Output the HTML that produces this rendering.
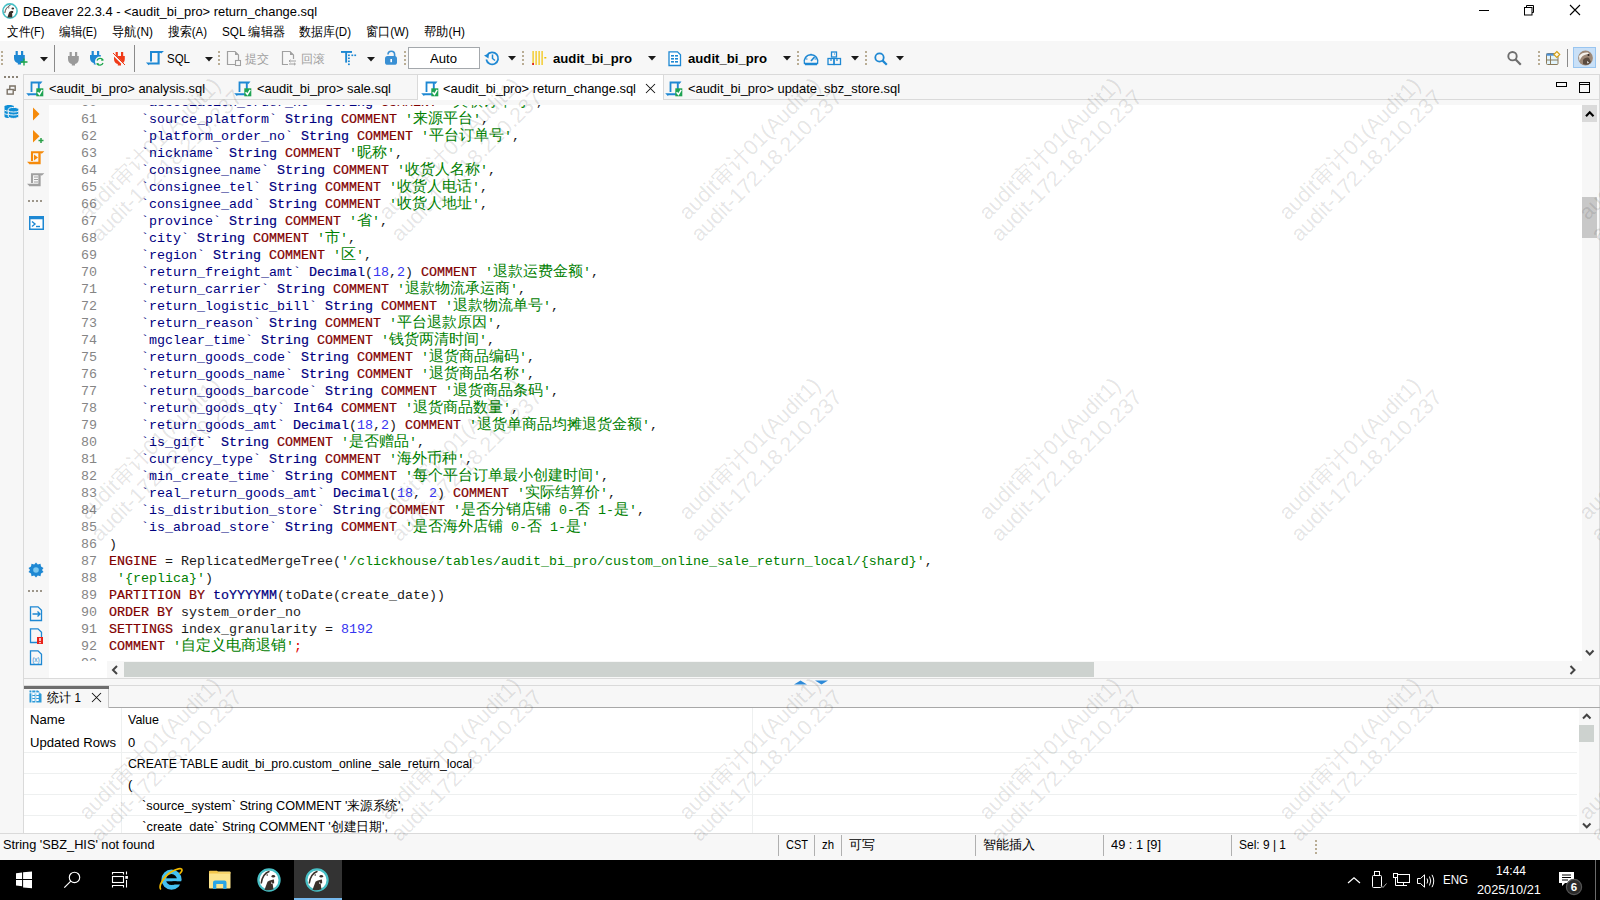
<!DOCTYPE html><html><head><meta charset="utf-8"><title>DBeaver</title><style>
*{margin:0;padding:0;box-sizing:border-box}
html,body{width:1600px;height:900px;overflow:hidden;background:#fff;font-family:"Liberation Sans",sans-serif;font-size:12px;color:#000}
.a{position:absolute}
.t{position:absolute;white-space:pre;line-height:14px}
.code{position:absolute;font-family:"Liberation Mono",monospace;font-size:13.333px;line-height:17px;white-space:pre;color:#000}
.ln{color:#858585}
.kw{color:#7f0000;-webkit-text-stroke:0.2px #7f0000}
.ty{color:#00007f;-webkit-text-stroke:0.2px #00007f}
.id{color:#00007f}
.st{color:#008000}
.nu{color:#3535f0}
.cj{display:inline-block;width:15px;text-align:left;font-size:14.5px;line-height:17px;vertical-align:top}
.wm{position:absolute;color:rgba(0,0,0,0.11);font-size:21.5px;line-height:24px;white-space:pre;transform:rotate(-45deg);transform-origin:center center;pointer-events:none}
svg{position:absolute;overflow:visible}
</style></head><body>
<div class="a" style="left:0px;top:0px;width:1600px;height:41px;background:#fff"></div>
<div class="a" style="left:0px;top:41px;width:1600px;height:33px;background:#f7f7f7"></div>
<div class="a" style="left:0px;top:74px;width:1600px;height:786px;background:#f7f7f7"></div>
<div class="a" style="left:23px;top:74px;width:1px;height:760px;background:#dadada"></div>
<svg style="left:2px;top:3px" width="16" height="16" viewBox="0 0 16 16"><circle cx="8" cy="8" r="7.1" fill="#fff" stroke="#48c0c6" stroke-width="1.6"/><path d="M2.8 10 C3.2 6.5 5 3.5 8.5 2.2" fill="none" stroke="#3a302a" stroke-width="0.9"/><circle cx="6.8" cy="4.8" r="0.6" fill="#3a302a"/><ellipse cx="10.8" cy="5.5" rx="1.3" ry="0.9" fill="#3a302a"/><path d="M5.3 14.4 L7.2 9 C8.7 8 10.3 8 11.2 7.8 L11.1 10 L10.1 10.1 L10.4 14.4 Z" fill="#3a302a"/></svg>
<div class="t" id="f23_5" style="left:23px;top:5px;font-size:13px;transform-origin:0 0;transform:scaleX(0.9922)">DBeaver 22.3.4 - &lt;audit_bi_pro&gt; return_change.sql</div>
<div class="a" style="left:1479px;top:10px;width:10px;height:1px;background:#000"></div>
<svg style="left:1524px;top:5px" width="12" height="12" viewBox="0 0 12 12"><rect x="0.5" y="2.5" width="7.5" height="7.5" fill="none" stroke="#000"/><path d="M2.5 2.5 V0.5 H9.5 V7.5 H8" fill="none" stroke="#000"/></svg>
<svg style="left:1570px;top:5px" width="11" height="11" viewBox="0 0 11 11"><path d="M0 0 L10 10 M10 0 L0 10" stroke="#000" stroke-width="1.1"/></svg>
<div class="t" id="f7_25" style="left:7px;top:25px;font-size:12.5px;transform-origin:0 0;transform:scaleX(0.8935)">文件(F)</div>
<div class="t" id="f59_25" style="left:59px;top:25px;font-size:12.5px;transform-origin:0 0;transform:scaleX(0.8905)">编辑(E)</div>
<div class="t" id="f112_25" style="left:112px;top:25px;font-size:12.5px;transform-origin:0 0;transform:scaleX(0.9456)">导航(N)</div>
<div class="t" id="f168_25" style="left:168px;top:25px;font-size:12.5px;transform-origin:0 0;transform:scaleX(0.9140)">搜索(A)</div>
<div class="t" id="f222_25" style="left:222px;top:25px;font-size:12.5px;transform-origin:0 0;transform:scaleX(0.9399)">SQL 编辑器</div>
<div class="t" id="f299_25" style="left:299px;top:25px;font-size:12.5px;transform-origin:0 0;transform:scaleX(0.9227)">数据库(D)</div>
<div class="t" id="f366_25" style="left:366px;top:25px;font-size:12.5px;transform-origin:0 0;transform:scaleX(0.9322)">窗口(W)</div>
<div class="t" id="f424_25" style="left:424px;top:25px;font-size:12.5px;transform-origin:0 0;transform:scaleX(0.9456)">帮助(H)</div>
<div class="a" style="left:1px;top:51px;width:2px;height:2px;background:#b9ad95"></div>
<div class="a" style="left:1px;top:55px;width:2px;height:2px;background:#b9ad95"></div>
<div class="a" style="left:1px;top:59px;width:2px;height:2px;background:#b9ad95"></div>
<div class="a" style="left:1px;top:63px;width:2px;height:2px;background:#b9ad95"></div>
<svg style="left:13px;top:51px" width="16" height="16" viewBox="0 0 16 16"><rect x="2.6" y="0" width="2.2" height="4.5" fill="#1e88d3"/><rect x="8" y="0" width="2.2" height="4.5" fill="#1e88d3"/><path d="M1 4 H11.8 V7 C11.8 10 10 11.5 8 12 V13.5 H4.8 V12 C2.8 11.5 1 10 1 7 Z" fill="#1e88d3"/><path d="M11 7.5 V14.5 M7.5 11 H14.5" stroke="#1aa54a" stroke-width="1.4"/></svg>
<svg style="left:40px;top:57px" width="8" height="5" viewBox="0 0 8 5"><path d="M0 0 H8 L4 4.5 Z" fill="#1a1a1a"/></svg>
<div class="a" style="left:54px;top:45px;width:1px;height:27px;background:#8a8a8a"></div>
<svg style="left:67px;top:52px" width="16" height="16" viewBox="0 0 16 16"><rect x="2.6" y="0" width="2.2" height="4.5" fill="#9a9a9a"/><rect x="8" y="0" width="2.2" height="4.5" fill="#9a9a9a"/><path d="M1 4 H11.8 V7 C11.8 10 10 11.5 8 12 V13.5 H4.8 V12 C2.8 11.5 1 10 1 7 Z" fill="#9a9a9a"/></svg>
<svg style="left:89px;top:51px" width="16" height="16" viewBox="0 0 16 16"><rect x="2.6" y="0" width="2.2" height="4.5" fill="#1e88d3"/><rect x="8" y="0" width="2.2" height="4.5" fill="#1e88d3"/><path d="M1 4 H11.8 V7 C11.8 10 10 11.5 8 12 V13.5 H4.8 V12 C2.8 11.5 1 10 1 7 Z" fill="#1e88d3"/><circle cx="11" cy="10.5" r="5" fill="#f7f7f7"/><path d="M8 9.5 A3.3 3.3 0 0 1 14 9" stroke="#1aa54a" stroke-width="1.3" fill="none"/><path d="M14 12 A3.3 3.3 0 0 1 8 12.5" stroke="#1aa54a" stroke-width="1.3" fill="none"/><path d="M12.5 7.3 L15 9.3 L12.3 10" fill="#1aa54a"/><path d="M9.5 14.7 L7 12.7 L9.7 12" fill="#1aa54a"/></svg>
<svg style="left:113px;top:52px" width="16" height="16" viewBox="0 0 16 16"><rect x="2.6" y="0" width="2.2" height="4.5" fill="#f03a17"/><rect x="8" y="0" width="2.2" height="4.5" fill="#f03a17"/><path d="M1 4 H11.8 V7 C11.8 10 10 11.5 8 12 V13.5 H4.8 V12 C2.8 11.5 1 10 1 7 Z" fill="#f03a17"/><path d="M0 2 L12 14" stroke="#f7f7f7" stroke-width="2.2"/><path d="M0 1 L12 13" stroke="#f03a17" stroke-width="1"/></svg>
<div class="a" style="left:134px;top:45px;width:1px;height:27px;background:#8a8a8a"></div>
<svg style="left:147px;top:50px" width="16" height="16" viewBox="0 0 16 16"><path d="M4 11.5 V2 H14.5 L13.6 2.9" fill="none" stroke="#1e88d3" stroke-width="2"/><path d="M11.6 2 V13.5 H1.5 L2.4 14.4" fill="none" stroke="#1e88d3" stroke-width="2.1"/></svg>
<div class="t" id="f167_52" style="left:167px;top:52px;font-size:13.5px;color:#000;transform-origin:0 0;transform:scaleX(0.8514)">SQL</div>
<svg style="left:205px;top:57px" width="8" height="5" viewBox="0 0 8 5"><path d="M0 0 H8 L4 4.5 Z" fill="#1a1a1a"/></svg>
<div class="a" style="left:218px;top:51px;width:2px;height:2px;background:#b9ad95"></div>
<div class="a" style="left:218px;top:55px;width:2px;height:2px;background:#b9ad95"></div>
<div class="a" style="left:218px;top:59px;width:2px;height:2px;background:#b9ad95"></div>
<div class="a" style="left:218px;top:63px;width:2px;height:2px;background:#b9ad95"></div>
<svg style="left:226px;top:50px" width="16" height="16" viewBox="0 0 16 16"><path d="M1.5 1.5 H9 L12.5 5 V14.5 H1.5 Z" fill="none" stroke="#a0a0a0" stroke-width="1.2"/><path d="M9 1.5 V5 H12.5" fill="#a0a0a0"/><rect x="9.5" y="10.5" width="5" height="5" fill="#f7f7f7" stroke="#a0a0a0" stroke-width="1.1"/></svg>
<div class="t" style="left:245px;top:52px;font-size:12px;color:#a0a0a0">提交</div>
<svg style="left:281px;top:50px" width="16" height="16" viewBox="0 0 16 16"><path d="M1.5 1.5 H9 L12.5 5 V14.5 H1.5 Z" fill="none" stroke="#a0a0a0" stroke-width="1.2"/><path d="M9 1.5 V5 H12.5" fill="#a0a0a0"/><rect x="7" y="9" width="9" height="7" fill="#f7f7f7"/><path d="M8.5 11 H15 M14 14 H8 M9.5 9.8 L8 11 L9.5 12.2 M13 12.8 L14.5 14 L13 15.2" stroke="#a0a0a0" stroke-width="1" fill="none"/></svg>
<div class="t" style="left:301px;top:52px;font-size:12px;color:#a0a0a0">回滚</div>
<svg style="left:341px;top:51px" width="16" height="16" viewBox="0 0 16 16"><rect x="0" y="0" width="11" height="1.9" fill="#1e88d3"/><rect x="4.2" y="0" width="1.9" height="11.6" fill="#1e88d3"/><rect x="7" y="3.5" width="1.8" height="1.6" fill="#1e88d3"/><rect x="10.4" y="3.5" width="1.8" height="1.6" fill="#1e88d3"/><rect x="13.3" y="3.5" width="1.8" height="1.6" fill="#1e88d3"/><rect x="7" y="6.5" width="1.8" height="1.6" fill="#1e88d3"/><rect x="7" y="9.5" width="1.8" height="1.6" fill="#1e88d3"/><rect x="7" y="12.5" width="1.8" height="1.6" fill="#1e88d3"/></svg>
<svg style="left:367px;top:57px" width="8" height="5" viewBox="0 0 8 5"><path d="M0 0 H8 L4 4.5 Z" fill="#1a1a1a"/></svg>
<svg style="left:384px;top:50px" width="14" height="16" viewBox="0 0 14 16"><path d="M4 4.5 A3.3 3.3 0 0 1 10.6 4.5 V7" fill="none" stroke="#3a90d4" stroke-width="1.6"/><rect x="1" y="6" width="12" height="8.8" rx="2.6" fill="#3a90d4"/><rect x="6.4" y="9" width="1.6" height="3.2" fill="#fff"/></svg>
<div class="a" style="left:404px;top:51px;width:2px;height:2px;background:#b9ad95"></div>
<div class="a" style="left:404px;top:55px;width:2px;height:2px;background:#b9ad95"></div>
<div class="a" style="left:404px;top:59px;width:2px;height:2px;background:#b9ad95"></div>
<div class="a" style="left:404px;top:63px;width:2px;height:2px;background:#b9ad95"></div>
<div class="a" style="left:408px;top:47px;width:72px;height:22px;background:#fff;border:1px solid #a4a8ac"></div>
<div class="t" id="f430_52" style="left:430px;top:52px;font-size:12.5px;color:#000;transform-origin:0 0;transform:scaleX(1.0498)">Auto</div>
<svg style="left:484px;top:50px" width="16" height="16" viewBox="0 0 16 16"><path d="M3.2 5 A6 6 0 1 1 2.3 9.5" fill="none" stroke="#1e88d3" stroke-width="1.7"/><path d="M0 5.5 L4.5 8.5 L5 3.5 Z" fill="#1e88d3"/><path d="M8.5 4.5 V8.5 L11 10.5" fill="none" stroke="#1e88d3" stroke-width="1.5"/></svg>
<svg style="left:508px;top:56px" width="8" height="5" viewBox="0 0 8 5"><path d="M0 0 H8 L4 4.5 Z" fill="#1a1a1a"/></svg>
<div class="a" style="left:522px;top:51px;width:2px;height:2px;background:#b9ad95"></div>
<div class="a" style="left:522px;top:55px;width:2px;height:2px;background:#b9ad95"></div>
<div class="a" style="left:522px;top:59px;width:2px;height:2px;background:#b9ad95"></div>
<div class="a" style="left:522px;top:63px;width:2px;height:2px;background:#b9ad95"></div>
<svg style="left:532px;top:51px" width="16" height="16" viewBox="0 0 16 16"><rect x="0.5" y="0" width="1.2" height="14" fill="#f2c200"/><rect x="3.5" y="0" width="1.2" height="14" fill="#f2c200"/><rect x="6.5" y="0" width="1.2" height="14" fill="#f2c200"/><rect x="9.5" y="0" width="1.2" height="14" fill="#f2c200"/><rect x="12.3" y="6" width="2" height="1.5" fill="#f2c200"/><rect x="0.2" y="12" width="1.8" height="2" fill="#e02020"/></svg>
<div class="t" id="f553_52" style="left:553px;top:52px;font-size:13.5px;font-weight:bold;color:#000;transform-origin:0 0;transform:scaleX(0.9751)">audit_bi_pro</div>
<svg style="left:648px;top:56px" width="8" height="5" viewBox="0 0 8 5"><path d="M0 0 H8 L4 4.5 Z" fill="#1a1a1a"/></svg>
<svg style="left:668px;top:51px" width="16" height="16" viewBox="0 0 16 16"><path d="M1 0.8 H9.5 L12.5 3.8 V14.5 H1 Z" fill="#fff" stroke="#1e88d3" stroke-width="1.3"/><rect x="3" y="4" width="3" height="1.6" fill="#1e88d3"/><rect x="7" y="4" width="3" height="1.6" fill="#1e88d3"/><rect x="3" y="7" width="3" height="1.6" fill="#1e88d3"/><rect x="7" y="7" width="3" height="1.6" fill="#1e88d3"/><rect x="3" y="10" width="3" height="1.6" fill="#1e88d3"/><rect x="7" y="10" width="3" height="1.6" fill="#1e88d3"/></svg>
<div class="t" id="f688_52" style="left:688px;top:52px;font-size:13.5px;font-weight:bold;color:#000;transform-origin:0 0;transform:scaleX(0.9751)">audit_bi_pro</div>
<svg style="left:783px;top:56px" width="8" height="5" viewBox="0 0 8 5"><path d="M0 0 H8 L4 4.5 Z" fill="#1a1a1a"/></svg>
<div class="a" style="left:797px;top:51px;width:2px;height:2px;background:#b9ad95"></div>
<div class="a" style="left:797px;top:55px;width:2px;height:2px;background:#b9ad95"></div>
<div class="a" style="left:797px;top:59px;width:2px;height:2px;background:#b9ad95"></div>
<div class="a" style="left:797px;top:63px;width:2px;height:2px;background:#b9ad95"></div>
<svg style="left:803px;top:51px" width="16" height="16" viewBox="0 0 16 16"><path d="M1.5 12.5 A6.8 6.8 0 1 1 14.5 12.5 Z" fill="none" stroke="#1e88d3" stroke-width="1.5"/><path d="M8 10 L11.5 6" stroke="#1e88d3" stroke-width="1.6"/><path d="M3 8 H4.5 M11.5 8 H13 M8 2.8 V4.3" stroke="#1e88d3" stroke-width="1.2"/><path d="M2 13.5 H14" stroke="#1e88d3" stroke-width="1.5"/></svg>
<svg style="left:827px;top:51px" width="16" height="16" viewBox="0 0 16 16"><rect x="4.5" y="1" width="5" height="5" fill="none" stroke="#1e88d3" stroke-width="1.3"/><rect x="1" y="7.5" width="6" height="6" fill="none" stroke="#1e88d3" stroke-width="1.3"/><rect x="7" y="7.5" width="6.5" height="6" fill="none" stroke="#1e88d3" stroke-width="1.3"/><path d="M7 3 H8 M4 7.5 V10 M10 7.5 V10" stroke="#1e88d3" stroke-width="1.2"/></svg>
<svg style="left:851px;top:56px" width="8" height="5" viewBox="0 0 8 5"><path d="M0 0 H8 L4 4.5 Z" fill="#1a1a1a"/></svg>
<div class="a" style="left:865px;top:51px;width:2px;height:2px;background:#b9ad95"></div>
<div class="a" style="left:865px;top:55px;width:2px;height:2px;background:#b9ad95"></div>
<div class="a" style="left:865px;top:59px;width:2px;height:2px;background:#b9ad95"></div>
<div class="a" style="left:865px;top:63px;width:2px;height:2px;background:#b9ad95"></div>
<svg style="left:874px;top:52px" width="14" height="14" viewBox="0 0 14 14"><circle cx="5.5" cy="5.5" r="4.2" fill="none" stroke="#1e88d3" stroke-width="1.8"/><path d="M8.6 8.6 L12.8 12.8" stroke="#1e88d3" stroke-width="2.2"/></svg>
<svg style="left:896px;top:56px" width="8" height="5" viewBox="0 0 8 5"><path d="M0 0 H8 L4 4.5 Z" fill="#1a1a1a"/></svg>
<svg style="left:1507px;top:51px" width="16" height="16" viewBox="0 0 16 16"><circle cx="5.5" cy="5.2" r="4.2" fill="none" stroke="#6e6e6e" stroke-width="1.9"/><path d="M8.4 8.2 L13.8 13.8" stroke="#6e6e6e" stroke-width="2.2"/></svg>
<div class="a" style="left:1538px;top:51px;width:2px;height:2px;background:#b9ad95"></div>
<div class="a" style="left:1538px;top:55px;width:2px;height:2px;background:#b9ad95"></div>
<div class="a" style="left:1538px;top:59px;width:2px;height:2px;background:#b9ad95"></div>
<div class="a" style="left:1538px;top:63px;width:2px;height:2px;background:#b9ad95"></div>
<svg style="left:1545px;top:51px" width="18" height="16" viewBox="0 0 18 16"><rect x="1.5" y="2.5" width="11.5" height="11" rx="1" fill="#e2f4fb" stroke="#8b7a5a" stroke-width="1"/><rect x="1.5" y="2.5" width="11.5" height="2.2" fill="#4a8fd6"/><path d="M1.5 9 H13 M5.5 4.5 V13.5" stroke="#8b7a5a" stroke-width="1"/><path d="M11.8 0.5 L14.8 3.5 L11.8 6.5 L8.8 3.5 Z" fill="#fff8e0" stroke="#d4a017" stroke-width="1.1"/></svg>
<div class="a" style="left:1567px;top:49px;width:1px;height:18px;background:#8a8a8a"></div>
<div class="a" style="left:1573px;top:47px;width:23px;height:21px;background:#c9e0f7;border:1px solid #99c5f0"></div>
<svg style="left:1577px;top:50px" width="17" height="17" viewBox="0 0 17 17"><circle cx="8.5" cy="8" r="7.4" fill="#9c8776"/><path d="M2 6 C4 3 8 2 11 2.5 L12 4 C9 4 6 5 4 8 L2.5 11 Z" fill="#f4f0ea"/><path d="M6 10 C7 8 10 7 12 8 L14 12 C12 15 8 15.5 6 14 Z" fill="#5a4a3e"/><circle cx="11.5" cy="5" r="1" fill="#2a2220"/><path d="M10 11 L12 12.5 L10.5 13.5 Z" fill="#fff"/></svg>
<div class="a" style="left:4px;top:76px;width:2px;height:2px;background:#8a8276"></div>
<div class="a" style="left:8px;top:76px;width:2px;height:2px;background:#8a8276"></div>
<div class="a" style="left:12px;top:76px;width:2px;height:2px;background:#8a8276"></div>
<div class="a" style="left:16px;top:76px;width:2px;height:2px;background:#8a8276"></div>
<svg style="left:6px;top:85px" width="12" height="11" viewBox="0 0 12 11"><path d="M3.8 4 V1 H9.2 V5.2 H7.5" fill="none" stroke="#7b7266" stroke-width="1.4"/><rect x="1.2" y="4.5" width="6" height="4.6" fill="#f7f7f7" stroke="#7b7266" stroke-width="1.4"/></svg>
<svg style="left:4px;top:104px" width="18" height="16" viewBox="0 0 18 16"><g><path d="M0.5 2.5 C0.5 0.5 10 0.5 10 2.5 V12.5 C10 14.5 0.5 14.5 0.5 12.5 Z" fill="#0e8ed6"/><path d="M0.5 6.2 C2 7.4 8 7.4 10 6.2 M0.5 9.6 C2 10.8 8 10.8 10 9.6" fill="none" stroke="#f7f7f7" stroke-width="1"/></g><g transform="translate(4.3,2.8)"><path d="M0 2.5 C0 0 10.5 0 10.5 2.5 V9.5 C10.5 12.3 0 12.3 0 9.5 Z" fill="#0e8ed6" stroke="#f7f7f7" stroke-width="1"/><path d="M0.2 4.2 C2 5.6 8.5 5.6 10.3 4.2 M0.2 7.2 C2 8.6 8.5 8.6 10.3 7.2" fill="none" stroke="#f7f7f7" stroke-width="1"/></g></svg>
<div class="a" style="left:23px;top:74px;width:1577px;height:1px;background:#dadada"></div>
<div class="a" style="left:24px;top:99px;width:1576px;height:1px;background:#dadada"></div>
<div class="a" style="left:417px;top:75px;width:247px;height:25px;background:#fff;border-left:1px solid #dadada;border-right:1px solid #dadada"></div>
<svg style="left:28px;top:81px" width="16" height="16" viewBox="0 0 16 16"><path d="M3.5 11 V1.5 H12.5 L11.8 2.3" fill="none" stroke="#1e88d3" stroke-width="1.8"/><path d="M10.8 1.5 V8 M9 13.3 H0.5 L1.5 14.3" fill="none" stroke="#1e88d3" stroke-width="1.9"/><rect x="8.3" y="7.3" width="7" height="8" fill="#1ea352"/><path d="M9.6 11.3 L11.4 13.4 L14.2 8.8" fill="none" stroke="#fff" stroke-width="1.5"/></svg>
<svg style="left:236px;top:81px" width="16" height="16" viewBox="0 0 16 16"><path d="M3.5 11 V1.5 H12.5 L11.8 2.3" fill="none" stroke="#1e88d3" stroke-width="1.8"/><path d="M10.8 1.5 V8 M9 13.3 H0.5 L1.5 14.3" fill="none" stroke="#1e88d3" stroke-width="1.9"/><rect x="8.3" y="7.3" width="7" height="8" fill="#1ea352"/><path d="M9.6 11.3 L11.4 13.4 L14.2 8.8" fill="none" stroke="#fff" stroke-width="1.5"/></svg>
<svg style="left:423px;top:81px" width="16" height="16" viewBox="0 0 16 16"><path d="M3.5 11 V1.5 H12.5 L11.8 2.3" fill="none" stroke="#1e88d3" stroke-width="1.8"/><path d="M10.8 1.5 V8 M9 13.3 H0.5 L1.5 14.3" fill="none" stroke="#1e88d3" stroke-width="1.9"/><rect x="8.3" y="7.3" width="7" height="8" fill="#1ea352"/><path d="M9.6 11.3 L11.4 13.4 L14.2 8.8" fill="none" stroke="#fff" stroke-width="1.5"/></svg>
<svg style="left:667px;top:81px" width="16" height="16" viewBox="0 0 16 16"><path d="M3.5 11 V1.5 H12.5 L11.8 2.3" fill="none" stroke="#1e88d3" stroke-width="1.8"/><path d="M10.8 1.5 V8 M9 13.3 H0.5 L1.5 14.3" fill="none" stroke="#1e88d3" stroke-width="1.9"/><rect x="8.3" y="7.3" width="7" height="8" fill="#1ea352"/><path d="M9.6 11.3 L11.4 13.4 L14.2 8.8" fill="none" stroke="#fff" stroke-width="1.5"/></svg>
<div class="t" id="f49_82" style="left:49px;top:82px;font-size:13px;transform-origin:0 0;transform:scaleX(0.9901)">&lt;audit_bi_pro&gt; analysis.sql</div>
<div class="t" id="f257_82" style="left:257px;top:82px;font-size:13px;transform-origin:0 0;transform:scaleX(0.9967)">&lt;audit_bi_pro&gt; sale.sql</div>
<div class="t" id="f443_82" style="left:443px;top:82px;font-size:13px;transform-origin:0 0;transform:scaleX(0.9926)">&lt;audit_bi_pro&gt; return_change.sql</div>
<div class="t" id="f688_82" style="left:688px;top:82px;font-size:13px;transform-origin:0 0;transform:scaleX(0.9909)">&lt;audit_bi_pro&gt; update_sbz_store.sql</div>
<svg style="left:646px;top:84px" width="10" height="10" viewBox="0 0 10 10"><path d="M0 0 L9 9 M9 0 L0 9" stroke="#111" stroke-width="1.05"/></svg>
<div class="a" style="left:1556px;top:82px;width:11px;height:5px;border:1px solid #000"></div>
<svg style="left:1579px;top:82px" width="11" height="11" viewBox="0 0 11 11"><rect x="0.5" y="0.5" width="10" height="10" fill="none" stroke="#000"/><path d="M0.5 2.5 H10.5" stroke="#000"/></svg>
<div class="a" style="left:24px;top:100px;width:1576px;height:5px;background:#f7f7f7"></div>
<div class="a" style="left:49px;top:105px;width:1533px;height:556px;background:#fff"></div>
<div class="a" style="left:49px;top:661px;width:58px;height:17px;background:#fff"></div>
<svg style="left:32px;top:107px" width="10" height="16" viewBox="0 0 10 16"><path d="M1 0.5 L7.5 7 L1 13.5 Z" fill="#f58a0b"/></svg>
<svg style="left:32px;top:130px" width="14" height="16" viewBox="0 0 14 16"><path d="M1 0 L7.5 6.2 L1 12.4 Z" fill="#f58a0b"/><path d="M6.5 10.5 H11.5 M9 8 V13" stroke="#2aa048" stroke-width="1.5"/></svg>
<svg style="left:28px;top:150px" width="16" height="16" viewBox="0 0 16 16"><path d="M4 11 V2.2 H13.8 L13 3" fill="none" stroke="#f58a0b" stroke-width="2.1"/><path d="M11.5 2.2 V13 H1.8 L2.6 13.8" fill="none" stroke="#f58a0b" stroke-width="2.3"/><path d="M6 4.5 L10 7.5 L6 10.5 Z" fill="#f58a0b"/></svg>
<svg style="left:28px;top:172px" width="16" height="16" viewBox="0 0 16 16"><path d="M4 11 V2.2 H13.8 L13 3" fill="none" stroke="#a0a0a0" stroke-width="2.1"/><path d="M11.5 2.2 V13 H1.8 L2.6 13.8" fill="none" stroke="#a0a0a0" stroke-width="2.3"/><path d="M6 5 H10 M6 7.5 H10 M6 10 H10" stroke="#a0a0a0" stroke-width="1"/></svg>
<div class="a" style="left:28px;top:200px;width:2px;height:2px;background:#9d968a"></div>
<div class="a" style="left:32px;top:200px;width:2px;height:2px;background:#9d968a"></div>
<div class="a" style="left:36px;top:200px;width:2px;height:2px;background:#9d968a"></div>
<div class="a" style="left:40px;top:200px;width:2px;height:2px;background:#9d968a"></div>
<svg style="left:29px;top:216px" width="15" height="15" viewBox="0 0 15 15"><rect x="0.75" y="0.75" width="13.5" height="12.5" fill="#fff" stroke="#1e88d3" stroke-width="1.5"/><rect x="0.75" y="0.75" width="13.5" height="2.5" fill="#1e88d3"/><path d="M3 5.5 L6 8 L3 10.5" fill="none" stroke="#1e88d3" stroke-width="1.4"/><path d="M7 10.5 H11" stroke="#1e88d3" stroke-width="1.4"/></svg>
<svg style="left:28px;top:562px" width="16" height="16" viewBox="0 0 16 16"><path d="M8 0.5 L9.8 2.5 L12.5 1.8 L13 4.6 L15.5 6 L14 8 L15.5 10 L13 11.4 L12.5 14.2 L9.8 13.5 L8 15.5 L6.2 13.5 L3.5 14.2 L3 11.4 L0.5 10 L2 8 L0.5 6 L3 4.6 L3.5 1.8 L6.2 2.5 Z" fill="#1e88d3"/><circle cx="8" cy="8" r="2.8" fill="#7cc8f0"/></svg>
<div class="a" style="left:28px;top:590px;width:2px;height:2px;background:#9d968a"></div>
<div class="a" style="left:32px;top:590px;width:2px;height:2px;background:#9d968a"></div>
<div class="a" style="left:36px;top:590px;width:2px;height:2px;background:#9d968a"></div>
<div class="a" style="left:40px;top:590px;width:2px;height:2px;background:#9d968a"></div>
<svg style="left:29px;top:606px" width="15" height="16" viewBox="0 0 15 16"><path d="M1.5 0.8 H9 L12.5 4.3 V14.5 H1.5 Z" fill="none" stroke="#1e88d3" stroke-width="1.3"/><path d="M3.5 8 H11 M8.5 5.5 L11 8 L8.5 10.5" fill="none" stroke="#1e88d3" stroke-width="1.4"/></svg>
<svg style="left:29px;top:628px" width="15" height="17" viewBox="0 0 15 17"><path d="M1.5 0.8 H9 L12.5 4.3 V14.5 H1.5 Z" fill="none" stroke="#1e88d3" stroke-width="1.3"/><rect x="8" y="9" width="6" height="7" fill="#e8231b"/><rect x="10.3" y="10" width="1.4" height="3" fill="#fff"/><rect x="10.3" y="14" width="1.4" height="1.2" fill="#fff"/></svg>
<svg style="left:29px;top:650px" width="15" height="16" viewBox="0 0 15 16"><path d="M1.5 0.8 H9 L12.5 4.3 V14.5 H1.5 Z" fill="none" stroke="#1e88d3" stroke-width="1.3"/><text x="7" y="12" font-size="6.5" font-family="Liberation Sans" fill="#1e88d3" text-anchor="middle">(x)</text></svg>
<div class="a" style="left:24px;top:678px;width:1576px;height:1px;background:#dadada"></div>
<div class="a" style="left:49px;top:105px;width:1529px;height:556px;overflow:hidden">
<div class="code ln" style="left:32px;top:-11px">60</div>
<div class="code" style="left:60px;top:-11px;color:#1a1a1a">    <span class="id">`association_order_no`</span> <span class="ty">String</span> <span class="kw">COMMENT</span> <span class="st">'<span class="cj">关</span><span class="cj">联</span><span class="cj">订</span><span class="cj">单</span><span class="cj">号</span>'</span>,</div>
<div class="code ln" style="left:32px;top:6px">61</div>
<div class="code" style="left:60px;top:6px;color:#1a1a1a">    <span class="id">`source_platform`</span> <span class="ty">String</span> <span class="kw">COMMENT</span> <span class="st">'<span class="cj">来</span><span class="cj">源</span><span class="cj">平</span><span class="cj">台</span>'</span>,</div>
<div class="code ln" style="left:32px;top:23px">62</div>
<div class="code" style="left:60px;top:23px;color:#1a1a1a">    <span class="id">`platform_order_no`</span> <span class="ty">String</span> <span class="kw">COMMENT</span> <span class="st">'<span class="cj">平</span><span class="cj">台</span><span class="cj">订</span><span class="cj">单</span><span class="cj">号</span>'</span>,</div>
<div class="code ln" style="left:32px;top:40px">63</div>
<div class="code" style="left:60px;top:40px;color:#1a1a1a">    <span class="id">`nickname`</span> <span class="ty">String</span> <span class="kw">COMMENT</span> <span class="st">'<span class="cj">昵</span><span class="cj">称</span>'</span>,</div>
<div class="code ln" style="left:32px;top:57px">64</div>
<div class="code" style="left:60px;top:57px;color:#1a1a1a">    <span class="id">`consignee_name`</span> <span class="ty">String</span> <span class="kw">COMMENT</span> <span class="st">'<span class="cj">收</span><span class="cj">货</span><span class="cj">人</span><span class="cj">名</span><span class="cj">称</span>'</span>,</div>
<div class="code ln" style="left:32px;top:74px">65</div>
<div class="code" style="left:60px;top:74px;color:#1a1a1a">    <span class="id">`consignee_tel`</span> <span class="ty">String</span> <span class="kw">COMMENT</span> <span class="st">'<span class="cj">收</span><span class="cj">货</span><span class="cj">人</span><span class="cj">电</span><span class="cj">话</span>'</span>,</div>
<div class="code ln" style="left:32px;top:91px">66</div>
<div class="code" style="left:60px;top:91px;color:#1a1a1a">    <span class="id">`consignee_add`</span> <span class="ty">String</span> <span class="kw">COMMENT</span> <span class="st">'<span class="cj">收</span><span class="cj">货</span><span class="cj">人</span><span class="cj">地</span><span class="cj">址</span>'</span>,</div>
<div class="code ln" style="left:32px;top:108px">67</div>
<div class="code" style="left:60px;top:108px;color:#1a1a1a">    <span class="id">`province`</span> <span class="ty">String</span> <span class="kw">COMMENT</span> <span class="st">'<span class="cj">省</span>'</span>,</div>
<div class="code ln" style="left:32px;top:125px">68</div>
<div class="code" style="left:60px;top:125px;color:#1a1a1a">    <span class="id">`city`</span> <span class="ty">String</span> <span class="kw">COMMENT</span> <span class="st">'<span class="cj">市</span>'</span>,</div>
<div class="code ln" style="left:32px;top:142px">69</div>
<div class="code" style="left:60px;top:142px;color:#1a1a1a">    <span class="id">`region`</span> <span class="ty">String</span> <span class="kw">COMMENT</span> <span class="st">'<span class="cj">区</span>'</span>,</div>
<div class="code ln" style="left:32px;top:159px">70</div>
<div class="code" style="left:60px;top:159px;color:#1a1a1a">    <span class="id">`return_freight_amt`</span> <span class="ty">Decimal</span>(<span class="nu">18</span>,<span class="nu">2</span>) <span class="kw">COMMENT</span> <span class="st">'<span class="cj">退</span><span class="cj">款</span><span class="cj">运</span><span class="cj">费</span><span class="cj">金</span><span class="cj">额</span>'</span>,</div>
<div class="code ln" style="left:32px;top:176px">71</div>
<div class="code" style="left:60px;top:176px;color:#1a1a1a">    <span class="id">`return_carrier`</span> <span class="ty">String</span> <span class="kw">COMMENT</span> <span class="st">'<span class="cj">退</span><span class="cj">款</span><span class="cj">物</span><span class="cj">流</span><span class="cj">承</span><span class="cj">运</span><span class="cj">商</span>'</span>,</div>
<div class="code ln" style="left:32px;top:193px">72</div>
<div class="code" style="left:60px;top:193px;color:#1a1a1a">    <span class="id">`return_logistic_bill`</span> <span class="ty">String</span> <span class="kw">COMMENT</span> <span class="st">'<span class="cj">退</span><span class="cj">款</span><span class="cj">物</span><span class="cj">流</span><span class="cj">单</span><span class="cj">号</span>'</span>,</div>
<div class="code ln" style="left:32px;top:210px">73</div>
<div class="code" style="left:60px;top:210px;color:#1a1a1a">    <span class="id">`return_reason`</span> <span class="ty">String</span> <span class="kw">COMMENT</span> <span class="st">'<span class="cj">平</span><span class="cj">台</span><span class="cj">退</span><span class="cj">款</span><span class="cj">原</span><span class="cj">因</span>'</span>,</div>
<div class="code ln" style="left:32px;top:227px">74</div>
<div class="code" style="left:60px;top:227px;color:#1a1a1a">    <span class="id">`mgclear_time`</span> <span class="ty">String</span> <span class="kw">COMMENT</span> <span class="st">'<span class="cj">钱</span><span class="cj">货</span><span class="cj">两</span><span class="cj">清</span><span class="cj">时</span><span class="cj">间</span>'</span>,</div>
<div class="code ln" style="left:32px;top:244px">75</div>
<div class="code" style="left:60px;top:244px;color:#1a1a1a">    <span class="id">`return_goods_code`</span> <span class="ty">String</span> <span class="kw">COMMENT</span> <span class="st">'<span class="cj">退</span><span class="cj">货</span><span class="cj">商</span><span class="cj">品</span><span class="cj">编</span><span class="cj">码</span>'</span>,</div>
<div class="code ln" style="left:32px;top:261px">76</div>
<div class="code" style="left:60px;top:261px;color:#1a1a1a">    <span class="id">`return_goods_name`</span> <span class="ty">String</span> <span class="kw">COMMENT</span> <span class="st">'<span class="cj">退</span><span class="cj">货</span><span class="cj">商</span><span class="cj">品</span><span class="cj">名</span><span class="cj">称</span>'</span>,</div>
<div class="code ln" style="left:32px;top:278px">77</div>
<div class="code" style="left:60px;top:278px;color:#1a1a1a">    <span class="id">`return_goods_barcode`</span> <span class="ty">String</span> <span class="kw">COMMENT</span> <span class="st">'<span class="cj">退</span><span class="cj">货</span><span class="cj">商</span><span class="cj">品</span><span class="cj">条</span><span class="cj">码</span>'</span>,</div>
<div class="code ln" style="left:32px;top:295px">78</div>
<div class="code" style="left:60px;top:295px;color:#1a1a1a">    <span class="id">`return_goods_qty`</span> <span class="ty">Int64</span> <span class="kw">COMMENT</span> <span class="st">'<span class="cj">退</span><span class="cj">货</span><span class="cj">商</span><span class="cj">品</span><span class="cj">数</span><span class="cj">量</span>'</span>,</div>
<div class="code ln" style="left:32px;top:312px">79</div>
<div class="code" style="left:60px;top:312px;color:#1a1a1a">    <span class="id">`return_goods_amt`</span> <span class="ty">Decimal</span>(<span class="nu">18</span>,<span class="nu">2</span>) <span class="kw">COMMENT</span> <span class="st">'<span class="cj">退</span><span class="cj">货</span><span class="cj">单</span><span class="cj">商</span><span class="cj">品</span><span class="cj">均</span><span class="cj">摊</span><span class="cj">退</span><span class="cj">货</span><span class="cj">金</span><span class="cj">额</span>'</span>,</div>
<div class="code ln" style="left:32px;top:329px">80</div>
<div class="code" style="left:60px;top:329px;color:#1a1a1a">    <span class="id">`is_gift`</span> <span class="ty">String</span> <span class="kw">COMMENT</span> <span class="st">'<span class="cj">是</span><span class="cj">否</span><span class="cj">赠</span><span class="cj">品</span>'</span>,</div>
<div class="code ln" style="left:32px;top:346px">81</div>
<div class="code" style="left:60px;top:346px;color:#1a1a1a">    <span class="id">`currency_type`</span> <span class="ty">String</span> <span class="kw">COMMENT</span> <span class="st">'<span class="cj">海</span><span class="cj">外</span><span class="cj">币</span><span class="cj">种</span>'</span>,</div>
<div class="code ln" style="left:32px;top:363px">82</div>
<div class="code" style="left:60px;top:363px;color:#1a1a1a">    <span class="id">`min_create_time`</span> <span class="ty">String</span> <span class="kw">COMMENT</span> <span class="st">'<span class="cj">每</span><span class="cj">个</span><span class="cj">平</span><span class="cj">台</span><span class="cj">订</span><span class="cj">单</span><span class="cj">最</span><span class="cj">小</span><span class="cj">创</span><span class="cj">建</span><span class="cj">时</span><span class="cj">间</span>'</span>,</div>
<div class="code ln" style="left:32px;top:380px">83</div>
<div class="code" style="left:60px;top:380px;color:#1a1a1a">    <span class="id">`real_return_goods_amt`</span> <span class="ty">Decimal</span>(<span class="nu">18</span>, <span class="nu">2</span>) <span class="kw">COMMENT</span> <span class="st">'<span class="cj">实</span><span class="cj">际</span><span class="cj">结</span><span class="cj">算</span><span class="cj">价</span>'</span>,</div>
<div class="code ln" style="left:32px;top:397px">84</div>
<div class="code" style="left:60px;top:397px;color:#1a1a1a">    <span class="id">`is_distribution_store`</span> <span class="ty">String</span> <span class="kw">COMMENT</span> <span class="st">'<span class="cj">是</span><span class="cj">否</span><span class="cj">分</span><span class="cj">销</span><span class="cj">店</span><span class="cj">铺</span> 0-<span class="cj">否</span> 1-<span class="cj">是</span>'</span>,</div>
<div class="code ln" style="left:32px;top:414px">85</div>
<div class="code" style="left:60px;top:414px;color:#1a1a1a">    <span class="id">`is_abroad_store`</span> <span class="ty">String</span> <span class="kw">COMMENT</span> <span class="st">'<span class="cj">是</span><span class="cj">否</span><span class="cj">海</span><span class="cj">外</span><span class="cj">店</span><span class="cj">铺</span> 0-<span class="cj">否</span> 1-<span class="cj">是</span>'</span></div>
<div class="code ln" style="left:32px;top:431px">86</div>
<div class="code" style="left:60px;top:431px;color:#1a1a1a">)</div>
<div class="code ln" style="left:32px;top:448px">87</div>
<div class="code" style="left:60px;top:448px;color:#1a1a1a"><span class="kw">ENGINE</span> = ReplicatedMergeTree(<span class="st">'/clickhouse/tables/audit_bi_pro/custom_online_sale_return_local/{shard}'</span>,</div>
<div class="code ln" style="left:32px;top:465px">88</div>
<div class="code" style="left:60px;top:465px;color:#1a1a1a"> <span class="st">'{replica}'</span>)</div>
<div class="code ln" style="left:32px;top:482px">89</div>
<div class="code" style="left:60px;top:482px;color:#1a1a1a"><span class="kw">PARTITION</span> <span class="kw">BY</span> <span class="ty">toYYYYMM</span>(toDate(create_date))</div>
<div class="code ln" style="left:32px;top:499px">90</div>
<div class="code" style="left:60px;top:499px;color:#1a1a1a"><span class="kw">ORDER</span> <span class="kw">BY</span> system_order_no</div>
<div class="code ln" style="left:32px;top:516px">91</div>
<div class="code" style="left:60px;top:516px;color:#1a1a1a"><span class="kw">SETTINGS</span> index_granularity = <span class="nu">8192</span></div>
<div class="code ln" style="left:32px;top:533px">92</div>
<div class="code" style="left:60px;top:533px;color:#1a1a1a"><span class="kw">COMMENT</span> <span class="st">'<span class="cj">自</span><span class="cj">定</span><span class="cj">义</span><span class="cj">电</span><span class="cj">商</span><span class="cj">退</span><span class="cj">销</span>'</span><span style="color:#e00000">;</span></div>
<div class="code ln" style="left:32px;top:550px">93</div>
</div>
<div class="a" style="left:1582px;top:105px;width:15px;height:17px;background:#dadada"></div>
<svg style="left:1585px;top:110px" width="10" height="8" viewBox="0 0 10 8"><path d="M1 6.2 L4.75 2.2 L8.5 6.2" fill="none" stroke="#000" stroke-width="2.1"/></svg>
<div class="a" style="left:1582px;top:197px;width:15px;height:41px;background:#c8c8c8"></div>
<svg style="left:1585px;top:649px" width="10" height="8" viewBox="0 0 10 8"><path d="M1 1.5 L4.75 5.5 L8.5 1.5" fill="none" stroke="#444" stroke-width="2"/></svg>
<div class="a" style="left:1599px;top:74px;width:1px;height:760px;background:#dadada"></div>
<svg style="left:111px;top:665px" width="8" height="10" viewBox="0 0 8 10"><path d="M6 1 L2 5 L6 9" fill="none" stroke="#444" stroke-width="2"/></svg>
<div class="a" style="left:124px;top:662px;width:970px;height:15px;background:#cdd2cf"></div>
<svg style="left:1569px;top:665px" width="8" height="10" viewBox="0 0 8 10"><path d="M1.5 1 L5.5 5 L1.5 9" fill="none" stroke="#444" stroke-width="2"/></svg>
<div class="a" style="left:24px;top:679px;width:1576px;height:6px;background:#f7f7f7"></div>
<svg style="left:794px;top:680px" width="36" height="5" viewBox="0 0 36 5"><path d="M0 4.5 L6.5 0.5 L13 4.5 Z" fill="#2d8ad8"/><path d="M21 0.5 H34 L27.5 4.5 Z" fill="#2d8ad8"/></svg>
<div class="a" style="left:23px;top:685px;width:1577px;height:1px;background:#dadada"></div>
<div class="a" style="left:24px;top:686px;width:85px;height:22px;background:#f7f7f7;border-right:1px solid #c8c8c8"></div>
<div class="a" style="left:24px;top:686px;width:85px;height:3px;background:#6e6e6e"></div>
<div class="a" style="left:109px;top:707px;width:1491px;height:1px;background:#a8a8a8"></div>
<svg style="left:29px;top:690px" width="13" height="13" viewBox="0 0 13 13"><path d="M0.5 0.5 H9 L12.5 4 V12.5 H0.5 Z" fill="#2d9ad8"/><rect x="3.3" y="3" width="2.4" height="2" fill="#fff"/><rect x="3.3" y="6" width="2.4" height="2" fill="#fff"/><rect x="3.3" y="9" width="2.4" height="2" fill="#fff"/><rect x="7.3" y="3" width="2.4" height="2" fill="#fff"/><rect x="7.3" y="6" width="2.4" height="2" fill="#fff"/><rect x="7.3" y="9" width="2.4" height="2" fill="#fff"/><path d="M2.8 0 V13 M6.8 0 V13 M0 2.8 H13" stroke="#fff" stroke-width="0.8"/></svg>
<div class="t" id="f47_691" style="left:47px;top:691px;font-size:12.5px;transform-origin:0 0;transform:scaleX(0.9331)">统计 1</div>
<svg style="left:92px;top:693px" width="10" height="10" viewBox="0 0 10 10"><path d="M0 0 L9 9 M9 0 L0 9" stroke="#111" stroke-width="1.05"/></svg>
<div class="a" style="left:24px;top:708px;width:1555px;height:125px;background:#fff"></div>
<div class="a" style="left:121px;top:708px;width:1px;height:125px;background:#eef0f0"></div>
<div class="a" style="left:752px;top:708px;width:1px;height:125px;background:#eef0f0"></div>
<div class="a" style="left:24px;top:752px;width:1553px;height:1px;background:#eef0f0"></div>
<div class="a" style="left:24px;top:773px;width:1553px;height:1px;background:#eef0f0"></div>
<div class="a" style="left:24px;top:794px;width:1553px;height:1px;background:#eef0f0"></div>
<div class="a" style="left:24px;top:815px;width:1553px;height:1px;background:#eef0f0"></div>
<div class="a" style="left:24px;top:708px;width:1553px;height:125px;overflow:hidden">
<div class="t" id="f6_5" style="left:6px;top:5px;font-size:13px;transform-origin:0 0;transform:scaleX(1.0090)">Name</div>
<div class="t" id="f104_5" style="left:104px;top:5px;font-size:13px;transform-origin:0 0;transform:scaleX(0.9598)">Value</div>
<div class="t" id="f6_28" style="left:6px;top:28px;font-size:13px;transform-origin:0 0;transform:scaleX(1.0084)">Updated Rows</div>
<div class="t" style="left:104px;top:28px;font-size:13px">0</div>
<div class="t" id="f104_49" style="left:104px;top:49px;font-size:13px;transform-origin:0 0;transform:scaleX(0.9445)">CREATE TABLE audit_bi_pro.custom_online_sale_return_local</div>
<div class="t" style="left:104px;top:70px;font-size:13px">(</div>
<div class="t" id="f104_91" style="left:104px;top:91px;font-size:13px;transform-origin:0 0;transform:scaleX(0.9759)">    `source_system` String COMMENT '来源系统',</div>
<div class="t" id="f104_112" style="left:104px;top:112px;font-size:13px;transform-origin:0 0;transform:scaleX(0.9846)">    `create_date` String COMMENT '创建日期',</div>
</div>
<div class="a" style="left:1579px;top:708px;width:20px;height:125px;background:#f7f7f7"></div>
<svg style="left:1582px;top:713px" width="10" height="7" viewBox="0 0 10 7"><path d="M1 5.5 L4.75 1.7 L8.5 5.5" fill="none" stroke="#444" stroke-width="2"/></svg>
<div class="a" style="left:1579px;top:725px;width:15px;height:17px;background:#cdd2cf"></div>
<svg style="left:1582px;top:822px" width="10" height="7" viewBox="0 0 10 7"><path d="M1 1.5 L4.75 5.3 L8.5 1.5" fill="none" stroke="#444" stroke-width="2"/></svg>
<div class="a" style="left:0px;top:833px;width:1600px;height:1px;background:#dadada"></div>
<div class="a" style="left:0px;top:834px;width:1600px;height:26px;background:#f7f7f7"></div>
<div class="t" id="f3_838" style="left:3px;top:838px;font-size:13px;transform-origin:0 0;transform:scaleX(0.9803)">String 'SBZ_HIS' not found</div>
<div class="a" style="left:778px;top:835px;width:1px;height:21px;background:#b0b0b0"></div>
<div class="a" style="left:814px;top:835px;width:1px;height:21px;background:#b0b0b0"></div>
<div class="a" style="left:841px;top:835px;width:1px;height:21px;background:#b0b0b0"></div>
<div class="a" style="left:975px;top:835px;width:1px;height:21px;background:#b0b0b0"></div>
<div class="a" style="left:1103px;top:835px;width:1px;height:21px;background:#b0b0b0"></div>
<div class="a" style="left:1231px;top:835px;width:1px;height:21px;background:#b0b0b0"></div>
<div class="t" id="f786_838" style="left:786px;top:838px;font-size:13px;transform-origin:0 0;transform:scaleX(0.8462)">CST</div>
<div class="t" id="f822_838" style="left:822px;top:838px;font-size:13px;transform-origin:0 0;transform:scaleX(0.8737)">zh</div>
<div class="t" style="left:849px;top:838px;font-size:13px">可写</div>
<div class="t" style="left:983px;top:838px;font-size:13px">智能插入</div>
<div class="t" id="f1111_838" style="left:1111px;top:838px;font-size:13px;transform-origin:0 0;transform:scaleX(0.9883)">49 : 1 [9]</div>
<div class="t" id="f1239_838" style="left:1239px;top:838px;font-size:13px;transform-origin:0 0;transform:scaleX(0.9202)">Sel: 9 | 1</div>
<div class="a" style="left:1315px;top:840px;width:2px;height:2px;background:#b9ad95"></div>
<div class="a" style="left:1315px;top:844px;width:2px;height:2px;background:#b9ad95"></div>
<div class="a" style="left:1315px;top:848px;width:2px;height:2px;background:#b9ad95"></div>
<div class="a" style="left:1315px;top:852px;width:2px;height:2px;background:#b9ad95"></div>
<div class="a" style="left:0px;top:860px;width:1600px;height:40px;background:#000"></div>
<div class="a" style="left:294px;top:860px;width:48px;height:40px;background:#333"></div>
<div class="a" style="left:294px;top:898px;width:48px;height:2px;background:#76b9ed"></div>
<svg style="left:16px;top:871px" width="17" height="18" viewBox="0 0 17 18"><path d="M0 2.2 L6.1 1.5 V7.9 H0 Z M7.1 1.3 L16 0.5 V7.9 H7.1 Z M0 8.9 H6.1 V15.3 L0 14.6 Z M7.1 8.9 H16 V17.2 L7.1 16.4 Z" fill="#fff"/></svg>
<svg style="left:63px;top:871px" width="18" height="18" viewBox="0 0 18 18"><circle cx="11.5" cy="6.4" r="5.2" fill="none" stroke="#fff" stroke-width="1.15"/><path d="M7.8 10.1 L1.3 16.7" stroke="#fff" stroke-width="1.2"/></svg>
<svg style="left:111px;top:871px" width="18" height="18" viewBox="0 0 18 18"><path d="M1.5 3.5 V1.5 H12.5 V3.5 M1.5 16.5 V14.5 H12.5 V16.5 M15.5 0.5 V3.5 M15.5 9 V16.5" fill="none" stroke="#fff" stroke-width="1.1"/><rect x="1.5" y="5.5" width="11" height="6" fill="none" stroke="#fff" stroke-width="1.1"/><rect x="14.3" y="5" width="2.6" height="2.8" fill="#fff"/></svg>
<svg style="left:159px;top:867px" width="25" height="25" viewBox="0 0 25 25"><circle cx="12.5" cy="12.6" r="7.8" fill="none" stroke="#45c0f0" stroke-width="4.6"/><rect x="4" y="11.3" width="17" height="3" fill="#45c0f0"/><rect x="13.5" y="14.3" width="10" height="3.2" fill="#000"/><path d="M1.8 22.6 C-1 19 5 9 12 5 C17.5 1.8 22.5 0.5 23 2.8 C23.3 4 21.8 5.6 20.5 6.8" fill="none" stroke="#f0b800" stroke-width="1.7"/></svg>
<svg style="left:208px;top:870px" width="24" height="20" viewBox="0 0 24 20"><rect x="1" y="1.5" width="21.5" height="17" rx="0.8" fill="#fde58e"/><path d="M1 3.5 V1.5 Q1 0.8 2 0.8 H9 L10.5 2.5 H22.5 V3.5 Z" fill="#f3c64b"/><path d="M5 19 V12.5 Q5 10.5 7 10.5 H16.5 Q18.5 10.5 18.5 12.5 V19 H15.2 V14 H8.3 V19 Z" fill="#2aa6e6"/></svg>
<svg style="left:257px;top:868px" width="25" height="25" viewBox="0 0 25 25"><circle cx="12" cy="12" r="10.6" fill="#fff" stroke="#48c0c6" stroke-width="2.2"/><path d="M4.2 15.5 C4.8 10 7.5 5 12.5 3.2" fill="none" stroke="#3a302a" stroke-width="1.5"/><circle cx="10.2" cy="7" r="0.8" fill="#3a302a"/><ellipse cx="16.3" cy="8.3" rx="1.8" ry="1.2" fill="#3a302a"/><path d="M7.5 21.8 L10.5 13.8 C12.5 12.2 15 12 17 11.6 L17.2 15.2 L15.6 15.6 L16.5 21.2 C13.5 22.6 10 22.6 7.5 21.8 Z" fill="#3a302a"/><path d="M14.6 13.5 L15.6 16 L14.2 15.7 Z" fill="#fff"/></svg>
<svg style="left:305px;top:868px" width="25" height="25" viewBox="0 0 25 25"><circle cx="12" cy="12" r="10.6" fill="#fff" stroke="#48c0c6" stroke-width="2.2"/><path d="M4.2 15.5 C4.8 10 7.5 5 12.5 3.2" fill="none" stroke="#3a302a" stroke-width="1.5"/><circle cx="10.2" cy="7" r="0.8" fill="#3a302a"/><ellipse cx="16.3" cy="8.3" rx="1.8" ry="1.2" fill="#3a302a"/><path d="M7.5 21.8 L10.5 13.8 C12.5 12.2 15 12 17 11.6 L17.2 15.2 L15.6 15.6 L16.5 21.2 C13.5 22.6 10 22.6 7.5 21.8 Z" fill="#3a302a"/><path d="M14.6 13.5 L15.6 16 L14.2 15.7 Z" fill="#fff"/></svg>
<svg style="left:1347px;top:877px" width="14" height="7" viewBox="0 0 14 7"><path d="M1 6 L7 0.8 L13 6" fill="none" stroke="#fff" stroke-width="1.2"/></svg>
<svg style="left:1372px;top:871px" width="16" height="18" viewBox="0 0 16 18"><rect x="2.5" y="0.5" width="5" height="4" fill="none" stroke="#fff" stroke-width="1"/><rect x="0.5" y="4.5" width="9" height="12" rx="1" fill="none" stroke="#fff" stroke-width="1"/><path d="M9 14.5 L11 16.5 L14.5 12.5" fill="none" stroke="#aaa" stroke-width="1"/></svg>
<svg style="left:1393px;top:873px" width="18" height="16" viewBox="0 0 18 16"><rect x="4.5" y="1.5" width="12" height="8" fill="none" stroke="#fff" stroke-width="1"/><rect x="0.5" y="0.5" width="4" height="4" fill="#000" stroke="#fff" stroke-width="1"/><path d="M2.5 4.5 V12.5 H7 M10.5 9.5 V12.5 M7 12.5 H14" fill="none" stroke="#fff" stroke-width="1"/></svg>
<svg style="left:1417px;top:874px" width="18" height="14" viewBox="0 0 18 14"><path d="M0.5 4.5 H3.5 L7.5 0.8 V13.2 L3.5 9.5 H0.5 Z" fill="none" stroke="#fff" stroke-width="1"/><path d="M10 4.5 Q11.5 7 10 9.5 M12.5 2.5 Q15 7 12.5 11.5 M15 0.8 Q18.5 7 15 13.2" fill="none" stroke="#fff" stroke-width="1"/></svg>
<div class="t" id="f1443_873" style="left:1443px;top:873px;font-size:13px;color:#fff;transform-origin:0 0;transform:scaleX(0.8874)">ENG</div>
<div class="t" id="f1496_864" style="left:1496px;top:864px;font-size:13px;color:#fff;transform-origin:0 0;transform:scaleX(0.9217)">14:44</div>
<div class="t" id="f1477_883" style="left:1477px;top:883px;font-size:13px;color:#fff;transform-origin:0 0;transform:scaleX(0.9834)">2025/10/21</div>
<svg style="left:1558px;top:871px" width="28" height="26" viewBox="0 0 28 26"><path d="M1 1 H16 V12 H7 L4 15 V12 H1 Z" fill="#fff"/><path d="M4 4 H13 M4 6.5 H13 M4 9 H10" stroke="#000" stroke-width="1"/><circle cx="16" cy="16" r="7.6" fill="#2a2a2a" stroke="#555" stroke-width="1.2"/><text x="16" y="20.3" font-size="11.5" font-weight="bold" font-family="Liberation Sans" fill="#fff" text-anchor="middle">6</text></svg>
<div class="a" style="left:1595px;top:860px;width:1px;height:40px;background:#6a6a6a"></div>
<div class="wm" style="left:44px;top:133px;width:230px;height:50px;text-align:center">audit审计01(Audit1)
audit-172.18.210.237</div>
<div class="wm" style="left:44px;top:433px;width:230px;height:50px;text-align:center">audit审计01(Audit1)
audit-172.18.210.237</div>
<div class="wm" style="left:44px;top:733px;width:230px;height:50px;text-align:center">audit审计01(Audit1)
audit-172.18.210.237</div>
<div class="wm" style="left:344px;top:133px;width:230px;height:50px;text-align:center">audit审计01(Audit1)
audit-172.18.210.237</div>
<div class="wm" style="left:344px;top:433px;width:230px;height:50px;text-align:center">audit审计01(Audit1)
audit-172.18.210.237</div>
<div class="wm" style="left:344px;top:733px;width:230px;height:50px;text-align:center">audit审计01(Audit1)
audit-172.18.210.237</div>
<div class="wm" style="left:644px;top:133px;width:230px;height:50px;text-align:center">audit审计01(Audit1)
audit-172.18.210.237</div>
<div class="wm" style="left:644px;top:433px;width:230px;height:50px;text-align:center">audit审计01(Audit1)
audit-172.18.210.237</div>
<div class="wm" style="left:644px;top:733px;width:230px;height:50px;text-align:center">audit审计01(Audit1)
audit-172.18.210.237</div>
<div class="wm" style="left:944px;top:133px;width:230px;height:50px;text-align:center">audit审计01(Audit1)
audit-172.18.210.237</div>
<div class="wm" style="left:944px;top:433px;width:230px;height:50px;text-align:center">audit审计01(Audit1)
audit-172.18.210.237</div>
<div class="wm" style="left:944px;top:733px;width:230px;height:50px;text-align:center">audit审计01(Audit1)
audit-172.18.210.237</div>
<div class="wm" style="left:1244px;top:133px;width:230px;height:50px;text-align:center">audit审计01(Audit1)
audit-172.18.210.237</div>
<div class="wm" style="left:1244px;top:433px;width:230px;height:50px;text-align:center">audit审计01(Audit1)
audit-172.18.210.237</div>
<div class="wm" style="left:1244px;top:733px;width:230px;height:50px;text-align:center">audit审计01(Audit1)
audit-172.18.210.237</div>
<div class="wm" style="left:1544px;top:133px;width:230px;height:50px;text-align:center">audit审计01(Audit1)
audit-172.18.210.237</div>
<div class="wm" style="left:1544px;top:433px;width:230px;height:50px;text-align:center">audit审计01(Audit1)
audit-172.18.210.237</div>
<div class="wm" style="left:1544px;top:733px;width:230px;height:50px;text-align:center">audit审计01(Audit1)
audit-172.18.210.237</div>
</body></html>
